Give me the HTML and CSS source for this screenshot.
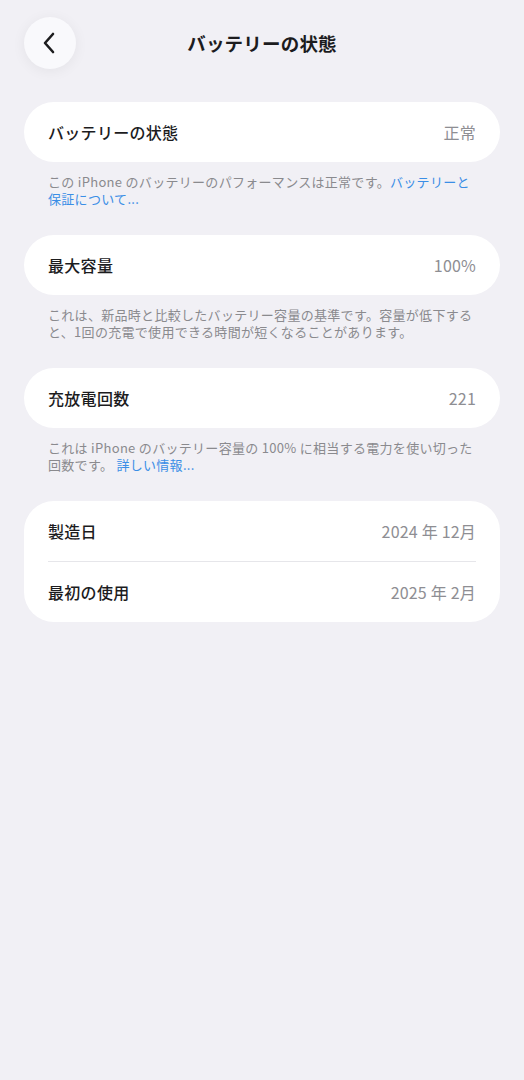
FILE: index.html
```html
<!DOCTYPE html>
<html lang="ja">
<head>
<meta charset="utf-8">
<title>バッテリーの状態</title>
<link rel="stylesheet" href="styles.css">
</head>
<body>
<div class="screen">
  <header class="nav">
    <button class="back" aria-label="戻る">
      <svg width="14" height="22" viewBox="0 0 14 22"><path d="M11 2 L3 11 L11 20" fill="none" stroke="#1c1c1e" stroke-width="2.6" stroke-linecap="round" stroke-linejoin="round"/></svg>
    </button>
    <h1 class="title">バッテリーの状態</h1>
  </header>

  <section class="group">
    <div class="card">
      <div class="row"><span class="label">バッテリーの状態</span><span class="value">正常</span></div>
    </div>
    <p class="note">この iPhone のバッテリーのパフォーマンスは正常です。<a class="link">バッテリーと保証について...</a></p>
  </section>

  <section class="group">
    <div class="card">
      <div class="row"><span class="label">最大容量</span><span class="value">100%</span></div>
    </div>
    <p class="note">これは、新品時と比較したバッテリー容量の基準です。容量が低下すると、1回の充電で使用できる時間が短くなることがあります。</p>
  </section>

  <section class="group">
    <div class="card">
      <div class="row"><span class="label">充放電回数</span><span class="value">221</span></div>
    </div>
    <p class="note">これは iPhone のバッテリー容量の 100% に相当する電力を使い切った回数です。 <a class="link">詳しい情報...</a></p>
  </section>

  <section class="group">
    <div class="card">
      <div class="row"><span class="label">製造日</span><span class="value">2024 年 12月</span></div>
      <div class="divider"></div>
      <div class="row"><span class="label">最初の使用</span><span class="value">2025 年 2月</span></div>
    </div>
  </section>
</div>
</body>
</html>
```

FILE: styles.css
```css
* { box-sizing: border-box; }

html, body {
  margin: 0;
  padding: 0;
  background: #f1f0f5;
}

body {
  font-family: "Noto Sans CJK JP", "Noto Sans", sans-serif;
  color: #1c1c1e;
  min-height: 1080px;
}

.screen {
  padding: 17px 24px 0 24px;
  display: flex;
  flex-direction: column;
}

.nav {
  position: relative;
  height: 52px;
  display: flex;
  align-items: center;
  justify-content: center;
}

.back {
  position: absolute;
  left: 0;
  top: 0;
  width: 52px;
  height: 52px;
  border-radius: 50%;
  border: none;
  background: #f9f9fc;
  box-shadow: 0 2px 14px rgba(0, 0, 0, 0.06);
  display: flex;
  align-items: center;
  justify-content: center;
  padding: 0 2px 0 0;
}

.title {
  margin: 0;
  font-size: 18.5px;
  font-weight: 700;
  letter-spacing: 0.2px;
}

.group {
  margin-top: 33px;
}

.group + .group {
  margin-top: 28px;
}

.card {
  background: #ffffff;
  border-radius: 30px;
  padding: 0 24px;
  width: 476px;
}

.row {
  height: 60px;
  display: flex;
  align-items: center;
  justify-content: space-between;
}

.label {
  font-size: 16px;
  font-weight: 500;
  letter-spacing: 0.3px;
}

.value {
  font-size: 16px;
  color: #8e8e93;
  letter-spacing: 0.2px;
}

.divider {
  height: 1px;
  background: #e6e6ea;
}

.note {
  margin: 11px 0 0 0;
  padding: 0 24px;
  font-size: 13px;
  line-height: 17px;
  color: #8a8a8e;
  letter-spacing: 0.3px;
}

.link {
  color: #3a8ee6;
}
```
